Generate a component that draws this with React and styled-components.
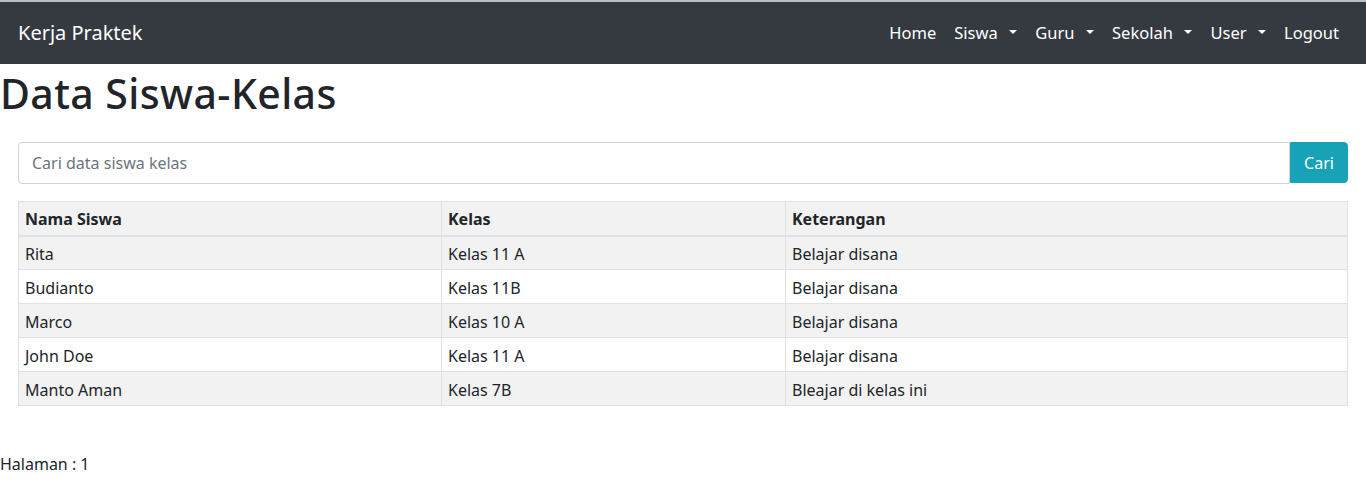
import React from "react";
import styled, { createGlobalStyle } from "styled-components";

const GlobalStyle = createGlobalStyle`
  * { box-sizing: border-box; }
  body {
    margin: 0;
    font-family: "Noto Sans", "Open Sans", sans-serif;
    font-size: 16px;
    line-height: 1.5;
    color: #212529;
    background: #fff;
    border-top: 2px solid #bfbfbf;
  }
`;

const Navbar = styled.nav`
  height: 62px;
  background: #343a40;
  display: flex;
  align-items: center;
  justify-content: space-between;
  padding: 0 18px;
`;

const Brand = styled.a`
  color: #fff;
  font-size: 20px;
  text-decoration: none;
`;

const NavList = styled.ul`
  display: flex;
  list-style: none;
  margin: 0;
  padding: 0;
`;

const NavLink = styled.a`
  color: #fff;
  padding: 8px 9px;
  font-size: 16.5px;
  text-decoration: none;
  display: inline-block;
  &::after {
    content: ${(p) => (p.$dropdown ? "''" : "none")};
    display: inline-block;
    margin-left: 0.7em;
    vertical-align: 0.255em;
    border-top: 0.3em solid;
    border-right: 0.3em solid transparent;
    border-left: 0.3em solid transparent;
  }
`;

const Title = styled.h1`
  font-size: 41px;
  font-weight: 500;
  line-height: 1.2;
  letter-spacing: 0.4px;
  margin: 5px 0 24px 0;
`;

const Content = styled.div`
  padding: 0 18px;
`;

const SearchGroup = styled.form`
  display: flex;
  margin-bottom: 17px;
`;

const SearchInput = styled.input`
  flex: 1;
  height: 42px;
  padding: 6px 13px;
  font: inherit;
  color: #495057;
  border: 1px solid #ced4da;
  border-radius: 4px 0 0 4px;
  &::placeholder { color: #6c757d; }
`;

const SearchButton = styled.button`
  width: 58px;
  height: 41px;
  font: inherit;
  color: #fff;
  background: #17a2b8;
  border: 1px solid #17a2b8;
  border-radius: 0 4px 4px 0;
`;

const Table = styled.table`
  width: 100%;
  border-collapse: collapse;
  table-layout: fixed;
  th, td {
    border: 1px solid #dee2e6;
    padding: 5px 6px 3px;
    text-align: left;
    height: 34px;
  }
  th {
    font-weight: 700;
    border-bottom-width: 2px;
    background: #f2f2f2;
  }
  tbody tr:nth-child(odd) { background: #f2f2f2; }
`;

const Footer = styled.div`
  margin-top: 46px;
`;

const rows = [
  ["Rita", "Kelas 11 A", "Belajar disana"],
  ["Budianto", "Kelas 11B", "Belajar disana"],
  ["Marco", "Kelas 10 A", "Belajar disana"],
  ["John Doe", "Kelas 11 A", "Belajar disana"],
  ["Manto Aman", "Kelas 7B", "Bleajar di kelas ini"],
];

export default function App() {
  return (
    <>
      <GlobalStyle />
      <Navbar>
        <Brand href="#">Kerja Praktek</Brand>
        <NavList>
          <li><NavLink href="#">Home</NavLink></li>
          <li><NavLink href="#" $dropdown>Siswa</NavLink></li>
          <li><NavLink href="#" $dropdown>Guru</NavLink></li>
          <li><NavLink href="#" $dropdown>Sekolah</NavLink></li>
          <li><NavLink href="#" $dropdown>User</NavLink></li>
          <li><NavLink href="#">Logout</NavLink></li>
        </NavList>
      </Navbar>
      <Title>Data Siswa-Kelas</Title>
      <Content>
        <SearchGroup onSubmit={(e) => e.preventDefault()}>
          <SearchInput type="text" placeholder="Cari data siswa kelas" />
          <SearchButton type="submit">Cari</SearchButton>
        </SearchGroup>
        <Table>
          <colgroup>
            <col style={{ width: 423 }} />
            <col style={{ width: 344 }} />
            <col />
          </colgroup>
          <thead>
            <tr>
              <th>Nama Siswa</th>
              <th>Kelas</th>
              <th>Keterangan</th>
            </tr>
          </thead>
          <tbody>
            {rows.map((r, i) => (
              <tr key={i}>
                {r.map((c, j) => <td key={j}>{c}</td>)}
              </tr>
            ))}
          </tbody>
        </Table>
      </Content>
      <Footer>Halaman : 1</Footer>
    </>
  );
}
